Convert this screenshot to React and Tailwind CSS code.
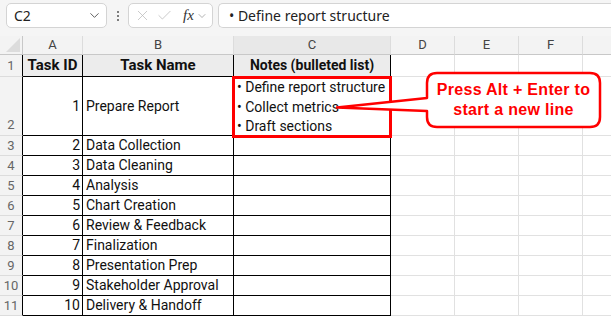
import React from 'react';
import { ChevronDown, X, Check } from 'lucide-react';

const tasks = [
  'Prepare Report',
  'Data Collection',
  'Data Cleaning',
  'Analysis',
  'Chart Creation',
  'Review & Feedback',
  'Finalization',
  'Presentation Prep',
  'Stakeholder Approval',
  'Delivery & Handoff',
];

const notes = ['• Define report structure', '• Collect metrics', '• Draft sections'];

const cols = ['A', 'B', 'C', 'D', 'E', 'F', ''];
const rowHeights = ['h-[22px]', 'h-[59px]', 'h-[20px]', 'h-[20px]', 'h-[20px]', 'h-[20px]', 'h-[20px]', 'h-[20px]', 'h-[20px]', 'h-[20px]', 'h-[20px]'];

const FormulaBar = () => (
  <div className="h-[36px] bg-[#f5f5f5] flex items-start pt-[3px] pl-[6px] font-['Noto_Sans',sans-serif]">
    {/* Name box */}
    <div className="w-[101px] h-[25px] bg-white border border-[#d4d4d4] rounded-[5px] flex items-center justify-between pl-[7px] pr-[4px]">
      <span className="text-[14px] text-[#222]">C2</span>
      <ChevronDown size={15} strokeWidth={1.5} className="text-[#555]" />
    </div>
    <div className="w-[21px] h-[25px] flex flex-col items-center justify-center gap-[2px]">
      <span className="w-[2px] h-[2px] bg-[#555] rounded-full" />
      <span className="w-[2px] h-[2px] bg-[#555] rounded-full" />
      <span className="w-[2px] h-[2px] bg-[#555] rounded-full" />
    </div>
    {/* Cancel / enter / fx */}
    <div className="w-[85px] h-[25px] bg-white border border-[#d4d4d4] rounded-[5px] flex items-center pl-[5px]">
      <X size={17} strokeWidth={1} className="text-[#b5b5b5]" />
      <Check size={17} strokeWidth={1} className="text-[#b5b5b5] ml-[5px]" />
      <span className="ml-[10px] text-[15px] italic text-[#333] font-['Liberation_Serif',serif] leading-none">fx</span>
      <ChevronDown size={12} strokeWidth={1.3} className="text-[#888] ml-[2px]" />
    </div>
    {/* Formula input */}
    <div className="ml-[5px] flex-1 h-[25px] bg-white border border-r-0 border-[#d4d4d4] rounded-l-[5px] flex items-center pl-[10px]">
      <span className="text-[14px] text-[#222]">• Define report structure</span>
    </div>
  </div>
);

const Sheet = () => (
  <div className="relative font-['Roboto',sans-serif]">
    <div className="grid grid-cols-[23px_60px_151px_157px_64px_64px_64px_1fr]">
      {/* Column headers */}
      <div className="h-[19px] bg-[#f3f3f3] border-r border-b border-[#c8c8c8] relative">
        <div className="absolute right-[2px] bottom-[2px] w-0 h-0 border-l-[14px] border-l-transparent border-b-[14px] border-b-[#dcdcdc]" />
      </div>
      {cols.map((c, i) => (
        <div
          key={c + i}
          className={`h-[19px] border-b border-[#c8c8c8] flex items-center justify-center text-[13px] text-[#444] ${
            i < 6 ? 'border-r border-r-[#dcdcdc]' : ''
          } ${c === 'C' ? 'bg-[#e8e8e8]' : 'bg-[#f3f3f3]'}`}
        >
          {c}
        </div>
      ))}

      {rowHeights.map((h, r) => {
        const rowNum = r + 1;
        return (
          <React.Fragment key={rowNum}>
            <div
              className={`${h} bg-[#f3f3f3] border-b border-b-[#dcdcdc] border-r border-r-black flex justify-center text-[13px] text-[#666] ${
                rowNum === 2 ? 'items-end pb-[1px]' : 'items-center'
              }`}
            >
              {rowNum}
            </div>
            {/* A */}
            <div
              className={`${h} border-r border-b border-black flex items-center text-[14px] text-[#111] ${
                rowNum === 1 ? 'justify-center font-bold bg-[#ececec] text-[15px]' : 'justify-end pr-[2px]'
              }`}
            >
              {rowNum === 1 ? 'Task ID' : rowNum - 1}
            </div>
            {/* B */}
            <div
              className={`${h} border-r border-b border-black flex items-center text-[14px] text-[#111] whitespace-nowrap ${
                rowNum === 1 ? 'justify-center font-bold bg-[#ececec] text-[15px]' : 'pl-[3px]'
              }`}
            >
              {rowNum === 1 ? 'Task Name' : tasks[rowNum - 2]}
            </div>
            {/* C */}
            <div
              className={`${h} border-r border-b border-black text-[14px] text-[#111] whitespace-nowrap ${
                rowNum === 1 ? 'flex items-center justify-center font-bold bg-[#ececec]' : 'pl-[3px]'
              }`}
            >
              {rowNum === 1 && 'Notes (bulleted list)'}
              {rowNum === 2 && (
                <div className="flex flex-col pt-[1px] leading-[19.5px]">
                  {notes.map((n) => (
                    <span key={n}>{n}</span>
                  ))}
                </div>
              )}
            </div>
            {/* D-G */}
            {[0, 1, 2, 3].map((k) => (
              <div
                key={k}
                className={`${h} border-b border-[#e1e1e1] ${k < 3 ? 'border-r' : ''}`}
              />
            ))}
          </React.Fragment>
        );
      })}
    </div>

    {/* Selection outline around C2 */}
    <div className="absolute left-[232px] top-[40px] w-[160px] h-[62px] border-[3px] border-[#ff0000]" />

    {/* Callout */}
    <div className="absolute left-[330px] top-[34px] w-[275px] h-[62px]">
      <svg width="275" height="62" viewBox="330 70 275 62" className="absolute inset-0">
        <path
          d="M 437 73 H 590 Q 600 73 600 83 V 117 Q 600 127 590 127 H 437 Q 427 127 427 117 V 111 L 337 107.5 L 427 98 V 83 Q 427 73 437 73 Z"
          fill="white"
          stroke="#ff0000"
          strokeWidth="2.5"
          strokeLinejoin="round"
        />
      </svg>
      <div className="absolute left-[97px] top-[10px] w-[173px] flex flex-col items-center text-[16px] leading-[20px] tracking-[0.3px] font-bold text-[#ff0000] font-['Liberation_Sans',sans-serif]">
        <span>Press Alt + Enter to</span>
        <span>start a new line</span>
      </div>
    </div>
  </div>
);

export default function App() {
  return (
    <div className="w-[611px] h-[320px] overflow-hidden bg-white">
      <FormulaBar />
      <Sheet />
    </div>
  );
}
